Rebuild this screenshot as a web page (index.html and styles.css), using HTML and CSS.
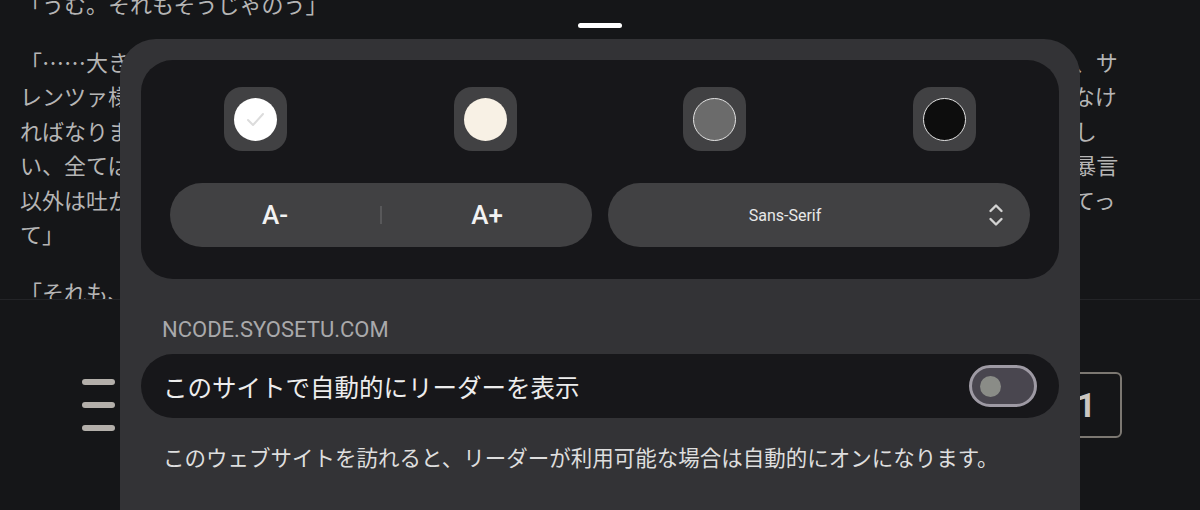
FILE: index.html
```html
<!DOCTYPE html>
<html lang="ja">
<head>
  <meta charset="UTF-8" />
  <meta name="viewport" content="width=device-width, initial-scale=1.0"/>
  <title>リーダー表示</title>
  <link rel="stylesheet" href="styles.css">
</head>
<body>
  <div class="reader">
    <div class="page-text">
      <p>「うむ。それもそうじゃのう」</p>
      <p>「……大きな声では言えぬが、儂らが今もこうして生きていられるのも、全てはあの御方のお陰。我らが主、サレンツァ様の御身をお守りするため、儂らは例えどんな苦難にも耐え抜き、どこまでも共に付き従っていかなければなりませぬ。されど今の儂らには、あの方をお守りするだけの力がまるで足りておらぬ。まこと嘆かわしい、全ては儂ら年寄りの不徳の致すところなのじゃ。あの男ときたら、昔からいつもいつもその口を開けば暴言以外は吐かぬ。少しは己の言葉を選べと何度言うても、まるで聞く耳を持とうともせぬ。もう少し優しくしてって」</p>
      <p>「それも、そうじゃのう。ところで、あの方は今どちらにおられるのじゃ？」</p>
    </div>
  </div>

  <div class="toolbar">
    <div class="menu-icon"><span></span><span></span><span></span></div>
    <div class="page-box">1</div>
  </div>

  <div class="handle"></div>

  <div class="sheet">
    <div class="appearance">
      <div class="themes">
        <button class="theme">
          <span class="theme-dot dot-white">
            <svg width="43" height="43" viewBox="0 0 43 43">
              <path d="M14 22 L19 27 L29 16" fill="none" stroke="#dcdcdc" stroke-width="2" stroke-linecap="round" stroke-linejoin="round"/>
            </svg>
          </span>
        </button>
        <button class="theme"><span class="theme-dot dot-sepia"></span></button>
        <button class="theme"><span class="theme-dot dot-gray"></span></button>
        <button class="theme"><span class="theme-dot dot-black"></span></button>
      </div>

      <div class="controls">
        <div class="size-pill">
          <span class="size-btn">A-</span>
          <span class="size-divider"></span>
          <span class="size-btn">A+</span>
        </div>
        <div class="font-pill">
          <span class="font-name">Sans-Serif</span>
          <svg class="chevrons" width="16" height="26" viewBox="0 0 16 26">
            <path d="M2.5 9 L8 3.5 L13.5 9 M2.5 17 L8 22.5 L13.5 17" fill="none" stroke="#d2d2d2" stroke-width="2.4" stroke-linecap="round" stroke-linejoin="round"/>
          </svg>
        </div>
      </div>
    </div>

    <div class="site-label">NCODE.SYOSETU.COM</div>

    <div class="auto-row">
      <span class="auto-title">このサイトで自動的にリーダーを表示</span>
      <div class="toggle"><span class="toggle-knob"></span></div>
    </div>

    <p class="auto-note">このウェブサイトを訪れると、リーダーが利用可能な場合は自動的にオンになります。</p>
  </div>
</body>
</html>
```

FILE: styles.css
```css
* { margin: 0; padding: 0; box-sizing: border-box; }
body {
  background: #151618; overflow: hidden; width: 1200px; height: 510px;
  font-family: Roboto, "Noto Sans CJK JP", sans-serif;
}

/* page behind the sheet */
.reader {
  height: 300px; overflow: hidden; border-bottom: 1px solid #232427;
  padding: 0 80px 0 20px;
}
.page-text {
  margin-top: -14px;
  font-family: "Noto Sans CJK JP", sans-serif; font-size: 22px; line-height: 34.5px;
  color: #b5b5b5;
}
.page-text p { margin-bottom: 23px; }

.toolbar {
  height: 210px; display: flex; justify-content: space-between; align-items: center;
  padding: 0 78px 0 82px;
}
.menu-icon { display: flex; flex-direction: column; gap: 17px; width: 33px; }
.menu-icon span { height: 6px; border-radius: 3px; background: #b3afaa; }
.page-box {
  width: 60px; height: 66px; border: 2px solid #7c7872; border-radius: 6px;
  display: flex; align-items: center; justify-content: flex-end; padding-right: 24px;
  font-size: 34px; font-weight: 700; color: #cac6c1;
}

/* reader settings sheet */
.handle {
  position: absolute; left: 578px; top: 23px;
  width: 44px; height: 5px; border-radius: 3px; background: #fff;
}
.sheet {
  position: absolute; left: 120px; top: 39px; width: 960px; height: 471px;
  background: #333336; border-radius: 36px 36px 0 0; padding: 21px;
}

.appearance {
  background: #17171a; border-radius: 32px; padding: 27px 0 32px;
  display: flex; flex-direction: column; gap: 32px;
}
.themes { display: grid; grid-template-columns: repeat(4, 1fr); justify-items: center; }
.theme {
  width: 63px; height: 64px; border-radius: 18px; background: #414143; border: none;
  display: flex; align-items: center; justify-content: center;
}
.theme-dot { width: 43px; height: 43px; border-radius: 50%; display: block; }
.dot-white { background: #fff; }
.dot-sepia { background: #f8f1e5; }
.dot-gray { background: #6b6b6b; border: 1px solid #e2e2e2; }
.dot-black { background: #0d0d0d; border: 1px solid #e2e2e2; }

.controls { display: grid; grid-template-columns: 1fr 1fr; gap: 16px; padding: 0 29px; }
.size-pill, .font-pill {
  height: 64px; border-radius: 32px; background: #414143;
  display: flex; align-items: center;
}
.size-btn { flex: 1; text-align: center; font-size: 26px; font-weight: 500; color: #f2f2f2; }
.size-divider { width: 2px; height: 18px; background: #58585a; }
.font-pill { padding-right: 26px; gap: 26px; }
.font-name { flex: 1; text-align: center; font-size: 16px; color: #e8e8e8; }

.site-label {
  margin: 38px 0 0 21px; font-size: 22px; line-height: 26px; color: #a9a9ab;
}
.auto-row {
  margin-top: 11px; height: 64px; border-radius: 32px; background: #17171a;
  display: flex; align-items: center; justify-content: space-between; padding: 0 22px;
}
.auto-title { font-family: "Noto Sans CJK JP", sans-serif; font-size: 24.5px; color: #ededed; }
.toggle {
  width: 68px; height: 42px; border: 3px solid #9e9aa4; border-radius: 21px;
  background: #49464f; display: flex; align-items: center; padding-left: 8px;
}
.toggle-knob { width: 21px; height: 21px; border-radius: 50%; background: #8a8c87; }
.auto-note {
  margin: 24px 0 0 22px;
  font-family: "Noto Sans CJK JP", sans-serif; font-size: 21.5px; line-height: 30px;
  color: #dedede;
}
```
